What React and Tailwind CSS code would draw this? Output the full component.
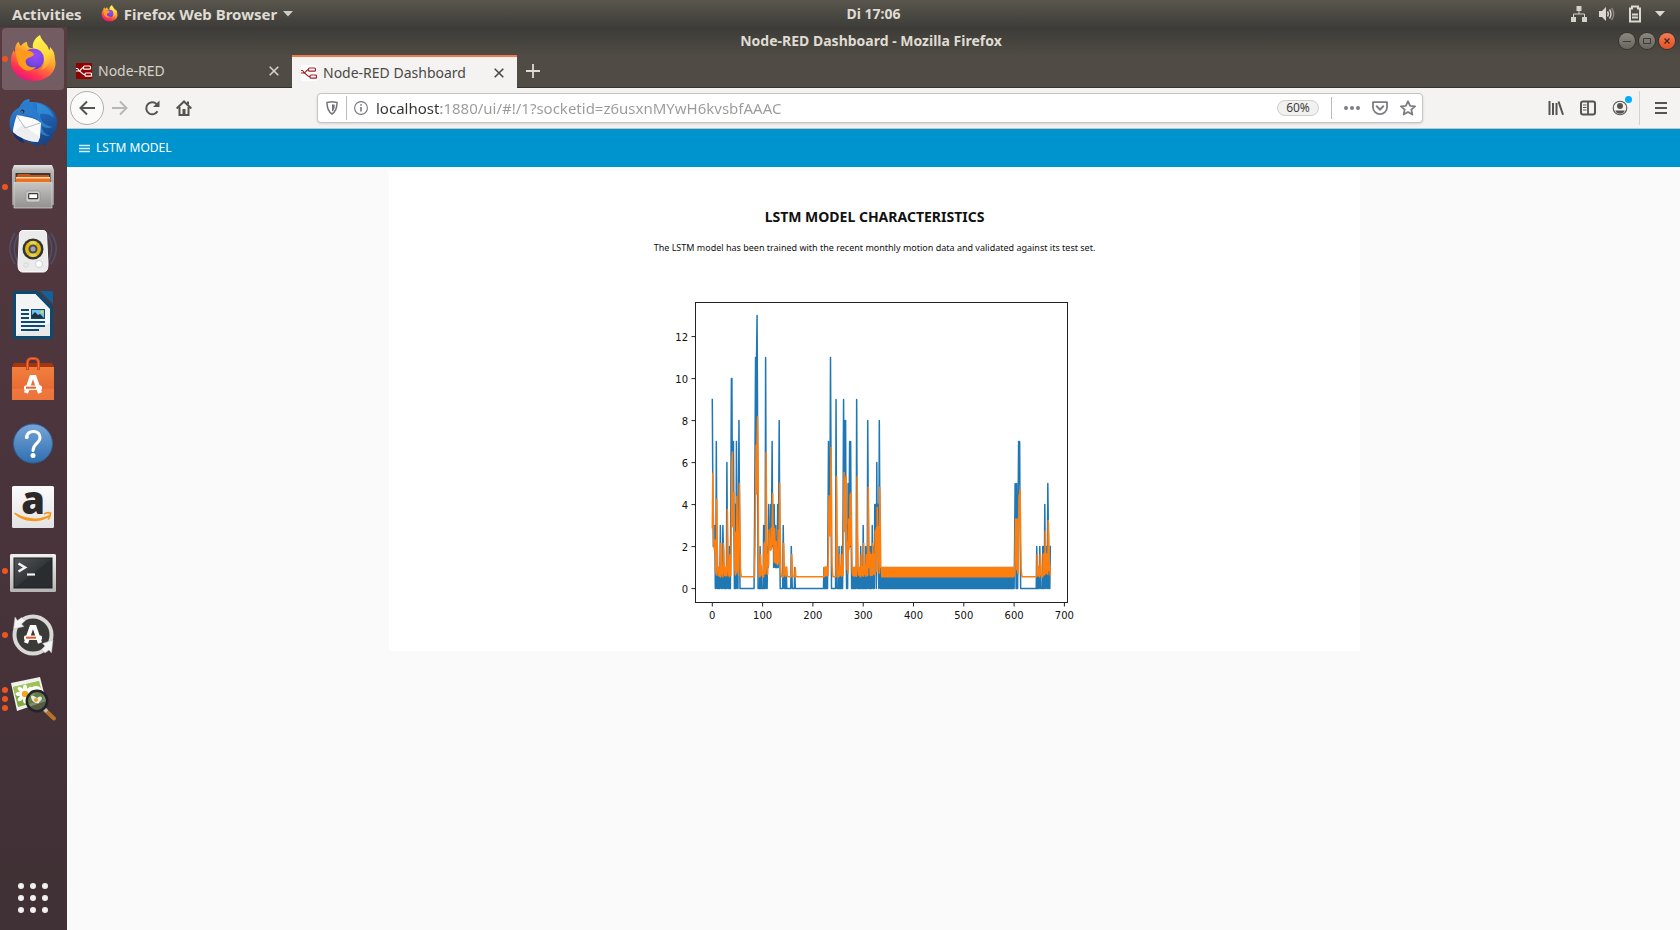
import React from "react";

function FirefoxIcon({ id, className }) {
  return (
    <svg viewBox="0 0 48 48" className={className} aria-hidden="true">
      <defs>
        <linearGradient id={id + "-body"} x1="0.85" y1="0.05" x2="0.3" y2="1">
          <stop offset="0" stopColor="#fff44f" />
          <stop offset="0.3" stopColor="#ffb62c" />
          <stop offset="0.55" stopColor="#ff7139" />
          <stop offset="0.8" stopColor="#ff2f55" />
          <stop offset="1" stopColor="#e31587" />
        </linearGradient>
        <radialGradient id={id + "-globe"} cx="0.6" cy="0.3" r="0.75">
          <stop offset="0" stopColor="#9a4df5" />
          <stop offset="0.6" stopColor="#7a45e5" />
          <stop offset="1" stopColor="#4a3fc0" />
        </radialGradient>
        <linearGradient id={id + "-flame"} x1="0.3" y1="0" x2="0.6" y2="1">
          <stop offset="0" stopColor="#fff552" />
          <stop offset="0.6" stopColor="#ffd83b" />
          <stop offset="1" stopColor="#ff9a2b" />
        </linearGradient>
      </defs>
      <path fill={"url(#" + id + "-body)"} d="M7 10c1-2 2-3 3-3 0 2 1 3 2 4 2-3 4-4 6-4 0 3 1 5 3 6h9l9 1c5 4 7.500 9 7.500 14 0 10.500-9.500 18-22.500 18S2 38 2 26c0-5 1-8 3-11 0 1 0 2 1 2 0-3 0-5 1-7z" />
      <path fill={"url(#" + id + "-flame)"} d="M31 0c-5 3-8 8-7 13 2 3 6 3 8 6 4 5 4 11 0 16 5-2 8-5 9-9 1 3 0 6-1 9 5-5 7-11 5-17-1-3-3-5-4-6 0 2 0 3-1 3-1-6-7-8-9-15z" />
      <circle cx="24.500" cy="24" r="10.500" fill={"url(#" + id + "-globe)"} />
      <path fill="#ff9a1f" d="M7 16c3-2 7-1 9 0 3-1 7 0 9 3-1 3-4 3-6 4-2 1-3 3-2 5 1 4 6 5 10 4-3 4-10 5-14 1-5-4-6-11-6-17z" />
    </svg>
  );
}

function ThunderbirdIcon() {
  return (
    <svg viewBox="0 0 48 48" className="size-12" aria-hidden="true">
      <defs>
        <linearGradient id="tb-body" x1="0.3" y1="0" x2="0.7" y2="1">
          <stop offset="0" stopColor="#2f86d8" />
          <stop offset="0.5" stopColor="#1f5fae" />
          <stop offset="1" stopColor="#17407f" />
        </linearGradient>
      </defs>
      <path fill="url(#tb-body)" d="M13 4c2-3 5-4 8-4-1 1-1 2 0 3 12-1 22 5 26 14 2 7 1 14-3 19l-2 6-3-1-2 6-5-3-4 4-4-3-14-5C4 37-1 29 1 20 3 12 8 9 12 8z" />
      <path fill="#3aa0e8" d="M28 4c9 2 15 8 17 15-4-4-9-5-14-4 0 8 4 11 13 13-5 2-9 1-12-2 1 6 4 9 9 11-8 1-13-5-13-13z" opacity="0.55" />
      <path fill="#17306b" d="M3 32c2 6 6 10 12 12l-2-7z" />
      <path fill="#fbfbfb" d="M8 16c4 1 18 2 24 8l-1 14-2 5C20 43 9 38 4 33c0-4 2-12 4-17z" />
      <path fill="#e4e6e8" d="M4 33l11-8 3 4 13 9-2 5C20 43 9 38 4 33z" opacity="0.6" />
      <path d="M8 17l8 12 15-5" fill="none" stroke="#b9bec4" strokeWidth="1" />
      <path fill="#2b7ccc" d="M9 14C9 8 12 4 16 3c7 1 13 7 16 20-6-5-15-8-23-7z" />
      <circle cx="13.500" cy="12.500" r="2" fill="#173b70" />
      <circle cx="13" cy="13" r="0.8" fill="#d9a94a" />
    </svg>
  );
}

function FilesIcon() {
  return (
    <svg viewBox="0 0 48 48" className="size-12" aria-hidden="true">
      <defs>
        <linearGradient id="fi-a" x1="0" y1="0" x2="0" y2="1">
          <stop offset="0" stopColor="#e6e5e4" />
          <stop offset="0.15" stopColor="#b9b8b7" />
          <stop offset="1" stopColor="#8d8c8b" />
        </linearGradient>
        <linearGradient id="fi-b" x1="0" y1="0" x2="0" y2="1">
          <stop offset="0" stopColor="#c6c5c4" />
          <stop offset="1" stopColor="#929190" />
        </linearGradient>
      </defs>
      <path fill="url(#fi-a)" d="M5 2h38l2 5v35H3V7z" />
      <path fill="#3a3634" d="M6.500 10h35v10h-35z" />
      <path fill="#c8541d" d="M8 13l1-2h11l2 1h18v8H8z" />
      <path fill="#f7d9a8" d="M7 14h34v6H7z" />
      <path fill="#e9731f" d="M7 15.500h34V20H7z" />
      <path fill="url(#fi-b)" stroke="#dddcdb" strokeWidth="0.700" d="M5 19.500h38V45H5z" />
      <rect x="17" y="28" width="14" height="11" rx="2" fill="#cfcecd" stroke="#8b8a89" strokeWidth="0.600" />
      <rect x="19.700" y="30.700" width="9" height="5" rx="0.500" fill="#fff" stroke="#3c3a39" strokeWidth="1.200" />
    </svg>
  );
}

function SpeakerIcon() {
  return (
    <svg viewBox="0 0 48 48" className="size-12" aria-hidden="true">
      <g fill="none" stroke="#4a7fc4" strokeWidth="1.500" opacity="0.35">
        <path d="M6 6c-7 11-7 20 0 31M9 8c-5 9-5 18 0 27" />
        <path d="M42 6c7 11 7 20 0 31M39 8c5 9 5 18 0 27" />
      </g>
      <path fill="#ebebeb" stroke="#fff" strokeWidth="1" d="M14 3.500h20c2 0 3 1 3.500 3L39 37c0 5-1 8-5 8H14c-4 0-5-3-5-8l1.500-30.500c.5-2 1.500-3 3.500-3z" />
      <circle cx="24" cy="22" r="10.500" fill="#333" />
      <circle cx="24" cy="22" r="8" fill="#dcb714" />
      <path fill="#f6e16a" d="M24 22l-4-7a8 8 0 0 1 8 0zM24 22l4 7a8 8 0 0 1-8 0z" opacity="0.6" />
      <circle cx="24" cy="22" r="4.500" fill="#4a4a52" />
      <circle cx="24" cy="22" r="2.500" fill="#a5a5ad" />
      <circle cx="30" cy="37" r="3.500" fill="#fff" stroke="#c5c5c5" strokeWidth="0.800" />
      <rect x="15" y="36" width="4" height="4" rx="1" fill="none" stroke="#d2d2d2" strokeWidth="0.800" />
    </svg>
  );
}

function WriterIcon() {
  return (
    <svg viewBox="0 0 48 48" className="size-12" aria-hidden="true">
      <path fill="#0b4a72" d="M6 0h22l16 16v30a2 2 0 0 1-2 2H6a2 2 0 0 1-2-2V2a2 2 0 0 1 2-2z" />
      <path fill="#0f629c" d="M31 0h11a2 2 0 0 1 2 2v11z" />
      <path fill="#f4f4f4" d="M7 3h19.500L41 18v27H7z" />
      <path fill="#dcdcdc" d="M7 44l34-12v13H7z" opacity="0.5" />
      <g fill="#0d4a73">
        <path d="M12 18h8v2h-8zM12 22h8v2h-8zM12 26h8v2h-8zM12 30h24v2H12zM12 34h24v2H12zM12 38h18v2H12z" />
      </g>
      <rect x="22" y="18" width="14" height="10" fill="#0d4a73" />
      <rect x="23" y="19" width="12" height="8" fill="#6fc1ee" />
      <circle cx="33" cy="21" r="1.500" fill="#f6cf2e" />
      <path fill="#1b3346" d="M23 27v-3l3-3 3 3 2-1 4 4z" />
    </svg>
  );
}

function PenRulerMark({ accent }) {
  return (
    <g>
      <path d="M17 38L22.500 22h3L31 38" fill="none" stroke="#fff" strokeWidth="4.200" />
      <rect x="15" y="30.500" width="18" height="4.500" rx="1.500" fill="#fff" />
      <rect x="17" y="31.700" width="10" height="2" fill={accent} />
    </g>
  );
}

function SoftwareIcon() {
  return (
    <svg viewBox="0 0 48 48" className="size-12" aria-hidden="true">
      <defs>
        <linearGradient id="sw" x1="0" y1="0" x2="0" y2="1">
          <stop offset="0" stopColor="#f0803f" />
          <stop offset="0.65" stopColor="#e96b33" />
          <stop offset="0.66" stopColor="#ee7840" />
          <stop offset="1" stopColor="#ec7439" />
        </linearGradient>
      </defs>
      <path fill="#a8330f" d="M5 8h38l2 4H3z" />
      <path fill="url(#sw)" d="M3 12h42v33H3z" />
      <path d="M18.500 15V8c0-3 1.500-4.500 4-4.500h3c2.500 0 4 1.500 4 4.500v7" fill="none" stroke="#d14a1e" strokeWidth="3" />
      <path d="M18.500 14V8c0-3 1.500-4.500 4-4.500h3c2.500 0 4 1.500 4 4.500v6" fill="none" stroke="#ef7440" strokeWidth="1" />
      <PenRulerMark accent="#e8642c" />
    </svg>
  );
}

function HelpIcon() {
  return (
    <svg viewBox="0 0 48 48" className="size-12" aria-hidden="true">
      <defs>
        <linearGradient id="hp" x1="0" y1="0" x2="0" y2="1">
          <stop offset="0" stopColor="#78a5d8" />
          <stop offset="1" stopColor="#2f6fb0" />
        </linearGradient>
      </defs>
      <circle cx="24" cy="24.500" r="19.500" fill="url(#hp)" stroke="#2e629c" strokeWidth="1" />
      <path d="M17.500 18.500c.5-4.500 3.500-6 7-6 4 0 6.500 2.500 6.500 6 0 6-7 6-7 13" fill="none" stroke="#fff" strokeWidth="3" strokeLinecap="round" />
      <circle cx="17.800" cy="18" r="2" fill="#fff" />
      <circle cx="24" cy="36.500" r="2.500" fill="#fff" />
    </svg>
  );
}

function AmazonIcon() {
  return (
    <svg viewBox="0 0 48 48" className="size-12 overflow-visible" aria-hidden="true">
      <defs>
        <linearGradient id="az" x1="0" y1="0" x2="0" y2="1">
          <stop offset="0" stopColor="#fbfbfb" />
          <stop offset="1" stopColor="#e3e3e3" />
        </linearGradient>
      </defs>
      <rect x="3" y="3" width="42" height="42" rx="1.500" fill="url(#az)" />
      <text x="24" y="31" textAnchor="middle" fontFamily="Open Sans, sans-serif" fontWeight="800" fontSize="38" fill="#2b2929">a</text>
      <path d="M6 30.500c9 8.500 24 9 34 2.500-10 5-24 4-34-2.500z" fill="#f7981d" stroke="#f7981d" strokeWidth="1.500" strokeLinejoin="round" />
      <path d="M35 31c3-1.500 5-1.500 6.500-1 0 2-.5 4-2.500 6.500" fill="none" stroke="#f7981d" strokeWidth="1.800" />
    </svg>
  );
}

function TerminalIcon() {
  return (
    <svg viewBox="0 0 48 48" className="size-12" aria-hidden="true">
      <defs>
        <linearGradient id="tm" x1="0" y1="0" x2="1" y2="1">
          <stop offset="0" stopColor="#55575a" />
          <stop offset="0.5" stopColor="#34373a" />
          <stop offset="0.52" stopColor="#2a2d30" />
          <stop offset="1" stopColor="#2b2e30" />
        </linearGradient>
        <linearGradient id="tf" x1="0" y1="0" x2="0" y2="1">
          <stop offset="0" stopColor="#f0f0ef" />
          <stop offset="1" stopColor="#b5b4b3" />
        </linearGradient>
      </defs>
      <rect x="1" y="7" width="46" height="38" rx="1.500" fill="url(#tf)" />
      <rect x="5" y="11" width="38" height="30" fill="url(#tm)" stroke="#1d1f20" strokeWidth="1" />
      <path d="M9.500 16.500l6.500 4-6.500 4" fill="none" stroke="#f2f2f2" strokeWidth="2.600" />
      <path d="M18 27.500h8" stroke="#f2f2f2" strokeWidth="2.200" />
    </svg>
  );
}

function UpdaterIcon() {
  return (
    <svg viewBox="0 0 48 48" className="size-12" aria-hidden="true">
      <circle cx="24" cy="24" r="18.500" fill="#3a3a38" stroke="#d9d9d8" strokeWidth="4" />
      <path fill="#f4f4f4" stroke="#b5b5b5" strokeWidth="0.500" d="M6 6l-1.500 12L15 15.500l-2.500-2.500 4-3.500-4-3-4 3z" />
      <path fill="#f4f4f4" stroke="#b5b5b5" strokeWidth="0.500" d="M42.500 42l1.500-13-10.500 3.500 2.500 2.500-3.500 3.500 3.500 3.500 4-3z" />
      <g transform="translate(0 -6)">
        <PenRulerMark accent="#f0571f" />
      </g>
    </svg>
  );
}

function ShotwellIcon() {
  return (
    <svg viewBox="0 0 48 48" className="size-12" aria-hidden="true">
      <path fill="#f1f1ee" d="M2 8L31 2l6 24-29 10z" />
      <path fill="#7fae3d" d="M4 12l26-6 4.500 19L9 32z" />
      <path fill="#a9cc62" d="M4 12l26-6 1.500 6-26 7z" opacity="0.7" />
      <g fill="#fff">
        <ellipse cx="16" cy="13.500" rx="2" ry="4" />
        <ellipse cx="16" cy="24.500" rx="2" ry="4" />
        <ellipse cx="10.500" cy="19" rx="4" ry="2" />
        <ellipse cx="21.500" cy="19" rx="4" ry="2" />
        <ellipse cx="12" cy="15" rx="2" ry="4" transform="rotate(-45 12 15)" />
        <ellipse cx="20" cy="15" rx="2" ry="4" transform="rotate(45 20 15)" />
        <ellipse cx="12" cy="23" rx="2" ry="4" transform="rotate(45 12 23)" />
        <ellipse cx="27" cy="14" rx="5" ry="3" />
      </g>
      <circle cx="16" cy="19" r="3.200" fill="#f0a818" />
      <path d="M36 35l9 8.500" stroke="#b97226" strokeWidth="4" strokeLinecap="round" />
      <path d="M35 33.500l3 3" stroke="#bbb" strokeWidth="3.500" />
      <circle cx="28" cy="26" r="10.200" fill="#5b6b45" fillOpacity="0.75" stroke="#22242a" strokeWidth="2.500" />
      <path fill="#fff" d="M22 21c3-1 4 1 6 2 2-2 4-2 5 0 0 3-3 3-3 5-4 1-8-2-8-7z" opacity="0.85" />
      <circle cx="27" cy="25" r="2" fill="#e0a21f" />
    </svg>
  );
}

const apps = [
  { name: "Firefox Web Browser", windows: 1, active: true, icon: <FirefoxIcon id="ff-dock" className="size-12" /> },
  { name: "Thunderbird Mail", windows: 0, icon: <ThunderbirdIcon /> },
  { name: "Files", windows: 1, icon: <FilesIcon /> },
  { name: "Rhythmbox", windows: 0, icon: <SpeakerIcon /> },
  { name: "LibreOffice Writer", windows: 0, icon: <WriterIcon /> },
  { name: "Ubuntu Software", windows: 0, icon: <SoftwareIcon /> },
  { name: "Help", windows: 0, icon: <HelpIcon /> },
  { name: "Amazon", windows: 0, icon: <AmazonIcon /> },
  { name: "Terminal", windows: 1, icon: <TerminalIcon /> },
  { name: "Software Updater", windows: 1, icon: <UpdaterIcon /> },
  { name: "Shotwell Viewer", windows: 3, icon: <ShotwellIcon /> },
];

function Dock() {
  return (
    <nav aria-label="Dock" className="flex w-[67px] shrink-0 flex-col justify-between bg-linear-to-b from-[#573b40] via-[#4a343c] to-[#3f3135] pb-3 pt-px">
      <ul className="flex flex-col gap-0.5">
        {apps.map((app) => (
          <li key={app.name} className="relative flex pl-0.5">
            <button
              type="button"
              aria-label={app.name}
              className={app.active ? "flex size-[62px] items-center justify-center rounded-[4px] bg-[#735d62]" : "flex size-[62px] items-center justify-center rounded-[4px]"}
            >
              {app.icon}
            </button>
            <span className="absolute inset-y-0 left-0.5 flex flex-col items-center justify-center gap-[3px]">
              {Array.from({ length: app.windows }, (_, i) => (
                <span key={i} className="size-[6px] rounded-full bg-[#ee5322]" />
              ))}
            </span>
          </li>
        ))}
      </ul>
      <button type="button" aria-label="Show Applications" className="ml-[13px] grid size-10 grid-cols-3 place-items-center p-[2px]">
        {Array.from({ length: 9 }, (_, i) => (
          <span key={i} className="size-[6px] rounded-full bg-[#f2f1f0]" />
        ))}
      </button>
    </nav>
  );
}

function TopBar() {
  return (
    <header className="grid h-[27px] grid-cols-3 items-center bg-linear-to-b from-[#5a564d] to-[#3e3d39] text-[14px] font-bold leading-5 text-[#dfdbd2]">
      <div className="flex items-center gap-[19px] pl-3 text-[15px]">
        <button type="button">Activities</button>
        <button type="button" className="flex items-center gap-[6px]">
          <FirefoxIcon id="ff-top" className="size-[17px]" />
          Firefox Web Browser
          <svg viewBox="0 0 10 6" className="h-[6px] w-[10px]" aria-hidden="true"><path fill="#cfcbc3" d="M0 0h10L5 5.500z" /></svg>
        </button>
      </div>
      <button type="button" className="ml-[67px] justify-self-center">Di 17:06</button>
      <div className="flex items-center justify-end gap-3 pr-[15px]" aria-label="System status">
        <svg viewBox="0 0 16 16" className="size-4" fill="#d5d2ca" aria-hidden="true">
          <path d="M5.500 0h5v5h-5zM0 11h5v5H0zM11 11h5v5h-5z" />
          <path d="M8 5v3M2.500 11V8h11v3" fill="none" stroke="#d5d2ca" strokeWidth="1" />
        </svg>
        <svg viewBox="0 0 16 16" className="size-4" fill="#dcd9d1" aria-hidden="true">
          <path d="M0 5h3l4-4v14l-4-4H0z" />
          <path d="M8.500 5.500c1 1.500 1 3.500 0 5M10.500 3.500c2 3 2 6 0 9" fill="none" stroke="#dcd9d1" strokeWidth="1.400" />
          <path d="M12.500 2c3 4 3 8 0 12" fill="none" stroke="#8b877f" strokeWidth="1.400" />
        </svg>
        <svg viewBox="0 0 16 18" className="h-[18px] w-4" fill="none" aria-hidden="true">
          <path d="M3 3.500h2v-2h6v2h2v13H3z" stroke="#dcd9d1" strokeWidth="2" />
          <path d="M5 9.500h6M5 12.500h6" stroke="#dcd9d1" strokeWidth="2" />
        </svg>
        <svg viewBox="0 0 10 6" className="h-[6px] w-[10px]" aria-hidden="true"><path fill="#dcd9d1" d="M0 0h10L5 5.500z" /></svg>
      </div>
    </header>
  );
}

function TitleBar() {
  return (
    <div className="grid h-7 grid-cols-[1fr_auto_1fr] items-center bg-linear-to-b from-[#3c3b37] to-[#4f4b44] pr-[5px] text-[#dfdbd2]">
      <span />
      <h2 className="text-[14px] font-bold leading-[18px]">Node-RED Dashboard - Mozilla Firefox</h2>
      <div className="flex justify-end gap-1">
        <button type="button" aria-label="Minimize" className="flex size-4 items-center justify-center rounded-full bg-linear-to-b from-[#8b8980] to-[#67655d] ring-1 ring-[#35342f]">
          <svg viewBox="0 0 10 10" className="size-[10px]" stroke="#3c3b37" strokeWidth="1" fill="none"><path d="M1 5.500h8" /></svg>
        </button>
        <button type="button" aria-label="Maximize" className="flex size-4 items-center justify-center rounded-full bg-linear-to-b from-[#8b8980] to-[#67655d] ring-1 ring-[#35342f]">
          <svg viewBox="0 0 10 10" className="size-[10px]" stroke="#3c3b37" strokeWidth="1" fill="none"><path d="M1.500 2.500h7v5h-7z" /></svg>
        </button>
        <button type="button" aria-label="Close window" className="flex size-4 items-center justify-center rounded-full bg-linear-to-b from-[#f47b55] to-[#e2501f] ring-1 ring-[#35342f]">
          <svg viewBox="0 0 10 10" className="size-[10px]" stroke="#45261a" strokeWidth="1.300" fill="none"><path d="M2.500 2.500l5 5M7.500 2.500l-5 5" /></svg>
        </button>
      </div>
    </div>
  );
}

function NodeRedIcon({ bg, fg }) {
  return (
    <svg viewBox="0 0 16 16" className="size-4 shrink-0" aria-hidden="true">
      <rect width="16" height="16" rx="1" fill={bg} />
      <g fill="none" stroke={fg} strokeWidth="1.200">
        <rect x="7.500" y="3" width="7" height="3.200" rx="1" />
        <rect x="9" y="10" width="6.500" height="3.200" rx="1" />
        <path d="M0 8h2.500C5.500 8 5 4.600 7.500 4.600M2.500 8C6 8 5.500 11.600 9 11.600M0 5.500h1.500c1 0 1 2.500 2 2.500" />
      </g>
    </svg>
  );
}

function CloseGlyph() {
  return (
    <svg viewBox="0 0 10 10" className="size-[10px]" fill="none" stroke="currentColor" strokeWidth="1.600" aria-hidden="true">
      <path d="M0.700 0.700l8.600 8.600M9.300 0.700L0.700 9.300" />
    </svg>
  );
}

function TabStrip() {
  return (
    <div className="flex h-[33px] border-b border-[#33322e] bg-[#504c45] text-[14px] leading-5">
      <div className="flex w-[225px] items-center pl-[9px] pr-[13px] text-[#d6d3ca]">
        <button type="button" className="flex flex-1 items-center gap-[6px]">
          <NodeRedIcon bg="#8f0000" fg="#ffffff" />
          Node-RED
        </button>
        <button type="button" aria-label="Close Node-RED tab"><CloseGlyph /></button>
      </div>
      <div className="-mb-px flex w-[225px] items-center border-t-2 border-[#ee7a4d] bg-[#f4f3f2] pl-[9px] pr-[13px] text-[#4a4945]">
        <button type="button" className="flex flex-1 items-center gap-[6px]">
          <NodeRedIcon bg="#ffffff" fg="#9f2128" />
          Node-RED Dashboard
        </button>
        <button type="button" aria-label="Close Node-RED Dashboard tab"><CloseGlyph /></button>
      </div>
      <button type="button" aria-label="New tab" className="flex w-8 items-center justify-center text-[#dedbd3]">
        <svg viewBox="0 0 14 14" className="size-[14px]" fill="none" stroke="currentColor" strokeWidth="1.800" aria-hidden="true"><path d="M7 0v14M0 7h14" /></svg>
      </button>
    </div>
  );
}

function Toolbar() {
  return (
    <div className="flex h-[41px] items-center border-b border-[#c6c3c0] bg-[#f4f3f2] text-[#55544f]">
      <div className="flex w-[250px] shrink-0 items-center pl-[3px]">
        <button type="button" aria-label="Back" className="flex size-[34px] items-center justify-center rounded-full border border-[#b1afad] bg-[#fbfbfa]">
          <svg viewBox="0 0 16 16" className="size-4" fill="none" stroke="currentColor" strokeWidth="2" aria-hidden="true"><path d="M16 8H1.500M8 1.500L1.500 8 8 14.500" /></svg>
        </button>
        <button type="button" aria-label="Forward" disabled className="ml-2 text-[#b9b8b5]">
          <svg viewBox="0 0 16 16" className="size-4" fill="none" stroke="currentColor" strokeWidth="2" aria-hidden="true"><path d="M0 8h14.500M8 1.500L14.500 8 8 14.500" /></svg>
        </button>
        <button type="button" aria-label="Reload" className="ml-4">
          <svg viewBox="0 0 16 16" className="size-4" fill="none" stroke="currentColor" strokeWidth="2" aria-hidden="true"><path d="M13.500 11.200A6 6 0 1 1 12.500 4" /><path d="M15.500 0.500v6.500H9z" fill="currentColor" stroke="none" /></svg>
        </button>
        <button type="button" aria-label="Home" className="ml-4">
          <svg viewBox="0 0 16 16" className="size-4" fill="none" stroke="currentColor" aria-hidden="true"><path strokeWidth="2" d="M0.700 8.500L8 1.500l7.300 7M3.500 7v8h9V7" /><path d="M12 1.500v3" strokeWidth="2" /><rect x="6.500" y="9" width="3" height="6" fill="currentColor" stroke="none" /></svg>
        </button>
      </div>
      <div className="flex h-[30px] min-w-0 flex-1 items-center rounded-[4px] border border-[#c6c4c2] bg-white pl-2 pr-[6px] text-[#77767a] shadow-sm">
        <svg viewBox="0 0 12 14" className="h-[14px] w-3 shrink-0" fill="none" stroke="#75747a" aria-hidden="true"><path strokeWidth="1.500" d="M1 1.500C3 1.500 5 0.800 6 0.800s3 .7 5 .7c0 6-1 9-5 11.500C2 10.500 1 7.500 1 1.500z" /><path fill="#75747a" stroke="none" d="M6 3.300c1 0 2 .4 2.800.4C8.800 7.500 8 9.500 6 10.600z" /></svg>
        <span className="ml-2 h-6 w-px shrink-0 bg-[#bdbcba]" />
        <svg viewBox="0 0 14 14" className="ml-[7px] size-[14px] shrink-0" fill="none" stroke="#75747a" aria-hidden="true"><circle cx="7" cy="7" r="6.400" strokeWidth="1.100" /><path strokeWidth="1.600" d="M7 6v4.500M7 3.200v1.600" /></svg>
        <input
          aria-label="Address"
          defaultValue="localhost:1880/ui/#!/1?socketid=z6usxnMYwH6kvsbfAAAC"
          className="ml-2 min-w-0 flex-1 bg-linear-to-r from-[#33322f] from-[65px] to-[#9b9a98] to-[65px] bg-clip-text text-[15px] leading-6 text-transparent outline-none"
        />
        <button type="button" aria-label="Reset zoom level" className="h-4 w-[42px] shrink-0 rounded-full border border-[#cfcecc] bg-[#f1f1f0] text-[12px] leading-[14px] text-[#3e3d3b]">60%</button>
        <span className="ml-3 mr-3 h-[22px] w-px shrink-0 bg-[#bdbcba]" />
        <div className="flex shrink-0 items-center gap-3">
          <button type="button" aria-label="Page actions"><svg viewBox="0 0 16 16" className="size-4" fill="#7e7d82"><circle cx="2" cy="8" r="2" /><circle cx="8" cy="8" r="2" /><circle cx="14" cy="8" r="2" /></svg></button>
          <button type="button" aria-label="Save to Pocket"><svg viewBox="0 0 16 16" className="size-4" fill="none" stroke="#7e7d82" strokeWidth="1.800"><path d="M1 2.200h14v5a7 7 0 0 1-14 0z" strokeLinejoin="round" /><path d="M4.700 6.300L8 9.500l3.300-3.200" strokeWidth="2" strokeLinecap="round" /></svg></button>
          <button type="button" aria-label="Bookmark this page"><svg viewBox="0 0 16 16" className="size-4" fill="none" stroke="#7e7d82" strokeWidth="1.800" strokeLinejoin="round"><path d="M8 1.200l2.100 4.600 5 .5-3.800 3.300 1.100 5L8 12l-4.400 2.600 1.100-5L0.900 6.300l5-.5z" /></svg></button>
        </div>
      </div>
      <div className="flex h-full shrink-0 items-center pl-[125px] pr-3">
        <button type="button" aria-label="Library"><svg viewBox="0 0 16 16" className="size-4" fill="none" stroke="currentColor" strokeWidth="2"><path d="M1.500 1v14M5 3v12M8.500 3v12M10.500 1.500l4.500 13.300" /></svg></button>
        <button type="button" aria-label="Sidebars" className="ml-4"><svg viewBox="0 0 16 16" className="size-4" fill="none" stroke="currentColor"><rect x="1" y="1.500" width="14" height="13" rx="2" strokeWidth="2" /><path d="M8 2v12" strokeWidth="1.800" /><path d="M3 5h3.500M3 7.500h3.500M3 10h3.500" strokeWidth="1.200" /></svg></button>
        <button type="button" aria-label="Account" className="relative ml-4">
          <svg viewBox="0 0 16 16" className="size-4" fill="currentColor"><circle cx="8" cy="8" r="6.800" fill="none" stroke="currentColor" strokeWidth="1.100" /><circle cx="8" cy="6.100" r="3" /><path d="M3.300 10.500h9.400c-.5 2.200-2.500 3.200-4.700 3.200s-4.200-1-4.700-3.200z" /></svg>
          <span className="absolute -right-1 -top-1 size-[7px] rounded-full bg-[#00aeff]" />
        </button>
        <span className="ml-[11px] h-[34px] w-px bg-[#d4d2d0]" />
        <button type="button" aria-label="Open menu" className="ml-[14px]"><svg viewBox="0 0 14 14" className="size-[14px]" stroke="currentColor" strokeWidth="2"><path d="M1 2h12M1 7h12M1 12h12" /></svg></button>
      </div>
    </div>
  );
}

/* Motion counts as [hour, value]; hours not listed are zero. */
const counts = [
  [0, 9], [1, 5], [2, 2], [3, 2], [4, 2], [5, 3], [8, 7], [9, 2], [12, 1], [16, 3], [17, 1], [21, 3], [22, 2], [25, 1],
  [27, 1], [29, 6], [30, 2], [34, 2], [37, 5], [38, 10], [39, 10], [40, 3], [41, 4], [42, 7], [43, 3], [46, 4], [48, 7], [49, 3],
  [52, 4], [53, 8], [54, 4], [84, 3], [85, 7], [86, 11], [87, 6], [88, 11], [89, 13], [90, 8], [95, 2], [97, 1], [102, 3], [104, 3],
  [106, 11], [107, 4], [110, 2], [111, 1], [112, 4], [113, 2], [114, 3], [115, 2], [116, 4], [117, 2], [118, 4], [119, 7], [120, 2], [121, 4],
  [122, 1], [123, 4], [124, 2], [125, 1], [126, 3], [127, 1], [128, 2], [129, 1], [130, 4], [131, 1], [132, 4], [133, 8], [134, 3],
  [141, 3], [142, 1], [145, 1], [147, 1], [157, 2], [158, 1], [164, 1], [222, 1], [224, 1], [226, 1], [228, 1], [230, 3],
  [231, 7], [232, 3], [233, 3], [234, 5], [235, 11], [236, 6], [246, 9], [247, 3], [252, 2], [254, 1], [257, 2], [260, 4], [261, 9],
  [262, 3], [263, 5], [264, 8], [265, 8], [266, 2], [268, 3], [270, 5], [271, 2], [272, 3], [273, 7], [274, 2], [275, 7], [276, 3],
  [279, 1], [282, 1], [284, 1], [287, 9], [288, 3], [291, 1], [295, 2], [297, 1], [300, 3], [302, 1], [305, 2], [307, 1],
  [309, 8], [310, 4], [312, 2], [315, 2], [318, 3], [319, 1], [321, 2], [323, 4], [324, 2], [325, 4], [327, 6], [328, 2], [329, 4], [330, 1],
  [332, 8], [333, 4], [601, 2], [602, 5], [603, 4], [605, 5], [608, 4], [609, 7], [610, 5], [611, 7], [612, 3],
  [645, 2], [647, 1], [651, 2], [652, 1], [657, 2], [659, 2], [661, 4], [662, 1], [664, 2], [665, 1], [667, 5],
  [668, 3], [670, 1], [672, 2],
];

const LAST_HOUR = 672;
const actual = new Array(LAST_HOUR + 1).fill(0);
counts.forEach(([hour, value]) => {
  actual[hour] = value;
});
for (let hour = 335; hour <= 600; hour += 2) actual[hour] = 1;

const predicted = actual.map((_, hour) => {
  if (hour === 0) return 2.9;
  const previous = actual[hour - 1];
  const before = hour > 1 ? actual[hour - 2] : 2;
  const earlier = hour > 2 ? actual[hour - 3] : 2;
  const trail = hour > 335 && hour < 601 ? 0 : before * 0.05 + earlier * 0.03;
  return 0.56 + previous * (previous > 1 ? 0.53 : 0.44) + trail;
});

const toX = (value) => 77.3 + value * 0.503;
const toY = (value) => 332.6 - value * 21;
const toPoints = (series) => series.map((value, hour) => toX(hour).toFixed(2) + "," + toY(value).toFixed(2)).join(" ");

function Chart() {
  return (
    <svg viewBox="0 0 480 390" className="mx-auto block h-[390px] w-[480px] max-w-full" role="img" aria-label="Measured and predicted motion">
      <g fill="none" strokeWidth="1.500" strokeLinejoin="round" strokeLinecap="square">
        <polyline points={toPoints(actual)} stroke="#1f77b4" />
        <polyline points={toPoints(predicted)} stroke="#ff7f0e" />
      </g>
      <rect x="60.500" y="46.500" width="372" height="300" fill="none" stroke="#222" strokeWidth="1" />
      <g stroke="#222" strokeWidth="1" fontFamily="DejaVu Sans, sans-serif" fontSize="10">
        {[0, 100, 200, 300, 400, 500, 600, 700].map((tick) => (
          <g key={tick}>
            <path d={"M" + toX(tick) + " 346.500v4"} />
            <text x={toX(tick)} y="363" textAnchor="middle" stroke="none" fill="#111">{tick}</text>
          </g>
        ))}
        {[0, 2, 4, 6, 8, 10, 12].map((tick) => (
          <g key={tick}>
            <path d={"M60.500 " + toY(tick) + "h-4"} />
            <text x="53" y={toY(tick) + 4} textAnchor="end" stroke="none" fill="#111">{tick}</text>
          </g>
        ))}
      </g>
    </svg>
  );
}

function Dashboard() {
  return (
    <div className="flex flex-1 flex-col bg-[#fafafa]">
      <header className="flex h-[38px] items-center bg-[#0094ce] px-3 text-white">
        <button type="button" aria-label="Open side menu" className="mr-[6px]">
          <svg viewBox="0 0 11 9" className="h-[9px] w-[11px]" stroke="#d9eef7" strokeWidth="1.600"><path d="M0 1.500h11M0 4.500h11M0 7.500h11" /></svg>
        </button>
        <h1 className="text-[12px]">LSTM MODEL</h1>
      </header>
      <div className="pl-0.5 pt-1">
        <main className="mx-auto w-[971px] max-w-full bg-white pb-[5px] pt-[34px] text-center text-[#111]">
          <h2 className="text-[14px] font-bold leading-6">LSTM MODEL CHARACTERISTICS</h2>
          <p className="mt-[11px] text-[9px] leading-4">The LSTM model has been trained with the recent monthly motion data and validated against its test set.</p>
          <Chart />
        </main>
      </div>
    </div>
  );
}

export default function App() {
  return (
    <div className="flex min-h-screen flex-col font-['Noto_Sans','Open_Sans',sans-serif]">
      <TopBar />
      <div className="flex flex-1">
        <Dock />
        <div className="flex min-w-0 flex-1 flex-col">
          <TitleBar />
          <TabStrip />
          <Toolbar />
          <Dashboard />
        </div>
      </div>
    </div>
  );
}
